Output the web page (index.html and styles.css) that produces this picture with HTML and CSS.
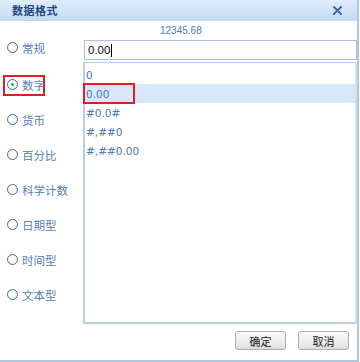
FILE: index.html
```html
<!DOCTYPE html>
<html>
<head>
    <meta charset="utf-8">
    <link rel="stylesheet" href="styles.css">
</head>
<body>
    <div class="dialog">
        <div class="title-bar">
            <span class="title">数据格式</span>
            <svg class="close" width="9" height="9" viewBox="0 0 9 9">
                <path d="M1 1 L8 8 M8 1 L1 8" stroke="#3d6aa3" stroke-width="2" stroke-linecap="round"/>
            </svg>
        </div>

        <div class="content">
            <div class="types">
                <div class="type-item"><span class="radio"></span>常规</div>
                <div class="type-item checked"><span class="radio"></span>数字</div>
                <div class="type-item"><span class="radio"></span>货币</div>
                <div class="type-item"><span class="radio"></span>百分比</div>
                <div class="type-item"><span class="radio"></span>科学计数</div>
                <div class="type-item"><span class="radio"></span>日期型</div>
                <div class="type-item"><span class="radio"></span>时间型</div>
                <div class="type-item"><span class="radio"></span>文本型</div>
            </div>

            <div class="format-panel">
                <div class="preview">12345.68</div>
                <div class="format-input"><span>0.00</span><span class="caret"></span></div>
                <div class="format-list">
                    <div class="format-item">0</div>
                    <div class="format-item selected">0.00</div>
                    <div class="format-item">#0.0#</div>
                    <div class="format-item">#,##0</div>
                    <div class="format-item">#,##0.00</div>
                </div>
            </div>
        </div>

        <div class="buttons">
            <button class="btn">确定</button>
            <button class="btn">取消</button>
        </div>
    </div>
</body>
</html>
```

FILE: styles.css
```css
body {
    margin: 0;
    background: #fff;
    font-family: "Noto Sans CJK SC", "DejaVu Sans", sans-serif;
}

.dialog {
    width: 357px;
    height: 360px;
    border-right: 2px solid #a9c8e4;
    border-bottom: 2px solid #a9c8e4;
    background: #fff;
    display: flex;
    flex-direction: column;
}

.title-bar {
    height: 20px;
    display: flex;
    align-items: center;
    justify-content: space-between;
    padding: 0 15px 0 12px;
    background: linear-gradient(#e0edfa, #c4dbf3);
    border-bottom: 1px solid #c5d9ee;
}

.title {
    font-size: 11px;
    font-weight: bold;
    color: #23497f;
    letter-spacing: 0.5px;
}

.close {
    display: block;
}

.content {
    display: flex;
    height: 303px;
}

.types {
    width: 83px;
    padding-top: 9px;
}

.type-item {
    height: 35px;
    display: flex;
    align-items: center;
    gap: 4px;
    padding-left: 7px;
    font-size: 11.5px;
    color: #5580b8;
}

.type-item.checked {
    position: relative;
    margin-top: 2px;
}

.type-item.checked::after {
    content: '';
    position: absolute;
    left: 3px;
    top: 8px;
    width: 38px;
    height: 17px;
    border: 2px solid #e02020;
}

.radio {
    width: 9px;
    height: 9px;
    border: 1px solid #4f6d8f;
    border-radius: 50%;
    background: radial-gradient(circle, #fff 40%, #e4ebf2);
    display: flex;
    align-items: center;
    justify-content: center;
}

.type-item.checked .radio::before {
    content: '';
    width: 3px;
    height: 3px;
    border-radius: 50%;
    background: #2faa3a;
}

.format-panel {
    flex: 1;
    display: flex;
    flex-direction: column;
}

.preview {
    height: 19px;
    padding-left: 77px;
    font-family: "Liberation Sans", sans-serif;
    font-size: 10px;
    line-height: 19px;
    color: #4d7ab5;
}

.format-input {
    height: 18px;
    margin: 0 0 2px 1px;
    border: 1px solid #a8c2de;
    display: flex;
    align-items: center;
    padding-left: 3px;
    font-family: "Liberation Sans", sans-serif;
    font-size: 11.5px;
    color: #111;
}

.caret {
    width: 1px;
    height: 13px;
    margin-left: 1px;
    background: #000;
}

.format-list {
    flex: 1;
    border: 1px solid #b5d0ea;
    border-width: 1px 2px 2px 2px;
    border-right-color: #d2e2f1;
    padding-top: 2px;
    position: relative;
}

.format-item {
    height: 19px;
    line-height: 20px;
    padding-left: 1px;
    font-family: "DejaVu Sans", sans-serif;
    font-size: 10.5px;
    color: #4d7ab5;
}

.format-item.selected {
    background: #d7e6f8;
    position: relative;
}

.format-item.selected::after {
    content: '';
    position: absolute;
    left: -2px;
    top: -1px;
    width: 48px;
    height: 17px;
    border: 2px solid #e02020;
}

.buttons {
    display: flex;
    justify-content: flex-end;
    gap: 12px;
    padding: 7px 8px 0 0;
}

.btn {
    width: 51px;
    height: 19px;
    padding: 0;
    border: 1px solid #b0b0b0;
    border-radius: 3px;
    background: linear-gradient(#fbfbfb 0%, #f0f0f0 50%, #dedede 100%);
    font-family: "Noto Sans CJK SC", sans-serif;
    font-size: 11px;
    color: #222;
}
```
